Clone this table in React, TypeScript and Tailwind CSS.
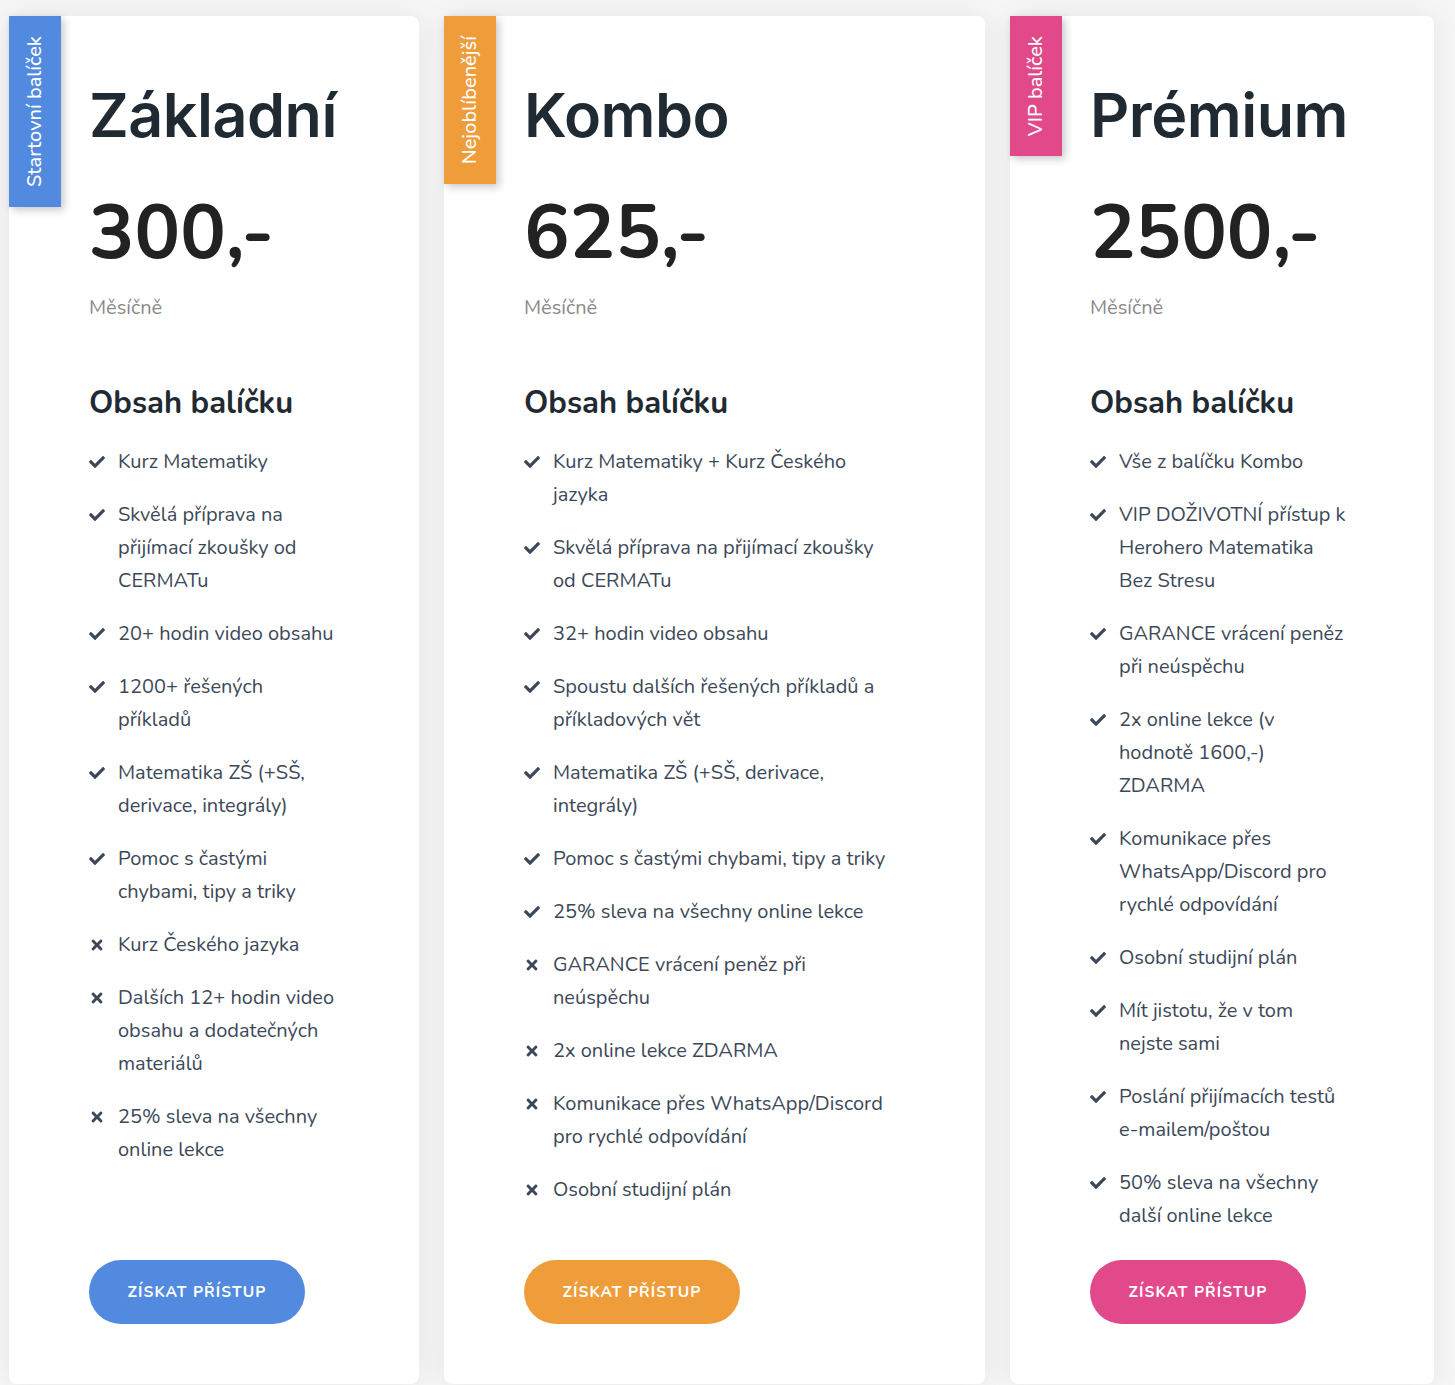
import React from "react";
import { FaCheck, FaTimes } from "react-icons/fa";

type Item = { ok: boolean; lines: string[] };
type Plan = {
  tag: string;
  tagH: string;
  name: string;
  price: string;
  width: string;
  color: string;
  items: Item[];
};

const plans: Plan[] = [
  {
    tag: "Startovní balíček",
    tagH: "h-[191px]",
    name: "Základní",
    price: "300,-",
    width: "w-[410px]",
    color: "bg-[#528ADF]",
    items: [
      { ok: true, lines: ["Kurz Matematiky"] },
      { ok: true, lines: ["Skvělá příprava na", "přijímací zkoušky od", "CERMATu"] },
      { ok: true, lines: ["20+ hodin video obsahu"] },
      { ok: true, lines: ["1200+ řešených", "příkladů"] },
      { ok: true, lines: ["Matematika ZŠ (+SŠ,", "derivace, integrály)"] },
      { ok: true, lines: ["Pomoc s častými", "chybami, tipy a triky"] },
      { ok: false, lines: ["Kurz Českého jazyka"] },
      { ok: false, lines: ["Dalších 12+ hodin video", "obsahu a dodatečných", "materiálů"] },
      { ok: false, lines: ["25% sleva na všechny", "online lekce"] },
    ],
  },
  {
    tag: "Nejoblíbenější",
    tagH: "h-[168px]",
    name: "Kombo",
    price: "625,-",
    width: "w-[541px]",
    color: "bg-[#EF9C3B]",
    items: [
      { ok: true, lines: ["Kurz Matematiky + Kurz Českého", "jazyka"] },
      { ok: true, lines: ["Skvělá příprava na přijímací zkoušky", "od CERMATu"] },
      { ok: true, lines: ["32+ hodin video obsahu"] },
      { ok: true, lines: ["Spoustu dalších řešených příkladů a", "příkladových vět"] },
      { ok: true, lines: ["Matematika ZŠ (+SŠ, derivace,", "integrály)"] },
      { ok: true, lines: ["Pomoc s častými chybami, tipy a triky"] },
      { ok: true, lines: ["25% sleva na všechny online lekce"] },
      { ok: false, lines: ["GARANCE vrácení peněz při", "neúspěchu"] },
      { ok: false, lines: ["2x online lekce ZDARMA"] },
      { ok: false, lines: ["Komunikace přes WhatsApp/Discord", "pro rychlé odpovídání"] },
      { ok: false, lines: ["Osobní studijní plán"] },
    ],
  },
  {
    tag: "VIP balíček",
    tagH: "h-[140px]",
    name: "Prémium",
    price: "2500,-",
    width: "w-[424px]",
    color: "bg-[#E1498A]",
    items: [
      { ok: true, lines: ["Vše z balíčku Kombo"] },
      { ok: true, lines: ["VIP DOŽIVOTNÍ přístup k", "Herohero Matematika", "Bez Stresu"] },
      { ok: true, lines: ["GARANCE vrácení peněz", "při neúspěchu"] },
      { ok: true, lines: ["2x online lekce (v", "hodnotě 1600,-)", "ZDARMA"] },
      { ok: true, lines: ["Komunikace přes", "WhatsApp/Discord pro", "rychlé odpovídání"] },
      { ok: true, lines: ["Osobní studijní plán"] },
      { ok: true, lines: ["Mít jistotu, že v tom", "nejste sami"] },
      { ok: true, lines: ["Poslání přijímacích testů", "e-mailem/poštou"] },
      { ok: true, lines: ["50% sleva na všechny", "další online lekce"] },
    ],
  },
];

function Card({ p }: { p: Plan }) {
  return (
    <div
      className={`relative ${p.width} h-[1368px] shrink-0 bg-white rounded-lg shadow-[0_0_30px_rgba(0,0,0,0.07)] flex flex-col pl-[80px] pr-[40px] pt-[69px] pb-[60px]`}
    >
      <div
        className={`absolute top-0 left-0 w-[52px] ${p.tagH} ${p.color} text-white shadow-[3px_3px_8px_rgba(0,0,0,0.22)] flex items-center justify-center`}
      >
        <span className="[writing-mode:vertical-rl] rotate-180 text-[20px] leading-none whitespace-nowrap font-['Nunito','Lato',sans-serif] font-medium">
          {p.tag}
        </span>
      </div>
      <h1 className="font-['Inter',sans-serif] font-semibold text-[61px] leading-none text-[#1f2a33] tracking-[-0.5px]">
        {p.name}
      </h1>
      <div className="mt-[49px] font-['Nunito','Lato',sans-serif] font-bold text-[76px] leading-none text-[#222222]">
        {p.price}
      </div>
      <div className="mt-[22px] font-['Nunito','Lato',sans-serif] text-[20px] text-[#8a8a8a]">
        Měsíčně
      </div>
      <h2 className="mt-[65px] font-['Nunito','Lato',sans-serif] font-bold text-[31px] leading-none text-[#1f2a33]">
        Obsah balíčku
      </h2>
      <ul className="mt-[26px] flex flex-col gap-[20px] font-['Nunito','Lato',sans-serif] text-[20px] leading-[33px] text-[#3c4858]">
        {p.items.map((it, i) => (
          <li key={i} className="flex items-start gap-[13px]">
            <span className="w-4 h-[33px] shrink-0 flex items-center justify-center text-[#3c4858]">
              {it.ok ? <FaCheck size={16} /> : <FaTimes size={16} />}
            </span>
            <span className="flex flex-col">
              {it.lines.map((l, j) => (
                <span key={j} className="whitespace-nowrap">
                  {l}
                </span>
              ))}
            </span>
          </li>
        ))}
      </ul>
      <button
        className={`mt-auto w-[216px] h-[64px] rounded-full ${p.color} text-white font-['Nunito','Lato',sans-serif] font-bold text-[15.5px] tracking-[1.1px] uppercase`}
      >
        Získat přístup
      </button>
    </div>
  );
}

export default function App() {
  return (
    <div className="min-h-[1385px] bg-[#f6f6f6] pt-[16px] pl-[9px] flex gap-[25px] overflow-hidden">
      {plans.map((p, i) => (
        <Card key={i} p={p} />
      ))}
    </div>
  );
}
